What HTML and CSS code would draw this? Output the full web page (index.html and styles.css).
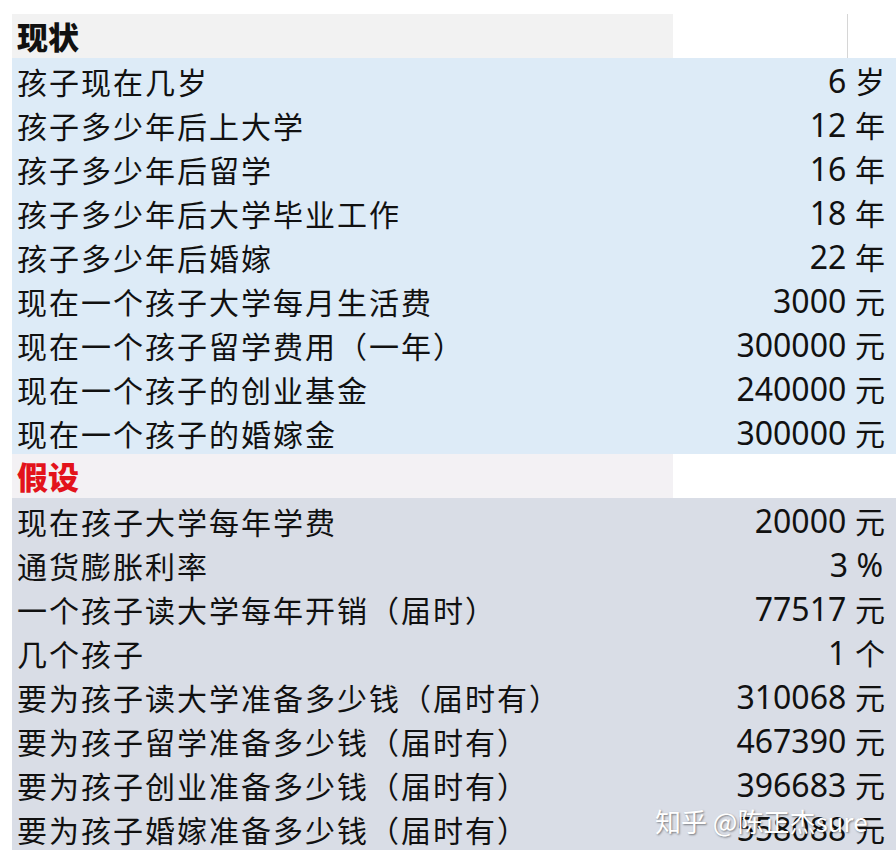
FILE: index.html
```html
<!DOCTYPE html>
<html lang="zh">
<head>
<meta charset="utf-8">
<link rel="stylesheet" href="styles.css">
</head>
<body>
<div class="sheet">
  <div class="row head head-now">
    <div class="label title">现状</div>
    <div class="blank divided"></div>
    <div class="blank"></div>
  </div>
  <div class="row blue"><div class="label">孩子现在几岁</div><div class="value"><span class="num">6</span> 岁</div></div>
  <div class="row blue"><div class="label">孩子多少年后上大学</div><div class="value"><span class="num">12</span> 年</div></div>
  <div class="row blue"><div class="label">孩子多少年后留学</div><div class="value"><span class="num">16</span> 年</div></div>
  <div class="row blue"><div class="label">孩子多少年后大学毕业工作</div><div class="value"><span class="num">18</span> 年</div></div>
  <div class="row blue"><div class="label">孩子多少年后婚嫁</div><div class="value"><span class="num">22</span> 年</div></div>
  <div class="row blue"><div class="label">现在一个孩子大学每月生活费</div><div class="value"><span class="num">3000</span> 元</div></div>
  <div class="row blue"><div class="label">现在一个孩子留学费用（一年）</div><div class="value"><span class="num">300000</span> 元</div></div>
  <div class="row blue"><div class="label">现在一个孩子的创业基金</div><div class="value"><span class="num">240000</span> 元</div></div>
  <div class="row blue"><div class="label">现在一个孩子的婚嫁金</div><div class="value"><span class="num">300000</span> 元</div></div>
  <div class="row head head-assume">
    <div class="label title red">假设</div>
    <div class="blank"></div>
    <div class="blank"></div>
  </div>
  <div class="row gray"><div class="label">现在孩子大学每年学费</div><div class="value"><span class="num">20000</span> 元</div></div>
  <div class="row gray"><div class="label">通货膨胀利率</div><div class="value"><span class="num">3 %</span></div></div>
  <div class="row gray"><div class="label">一个孩子读大学每年开销（届时）</div><div class="value"><span class="num">77517</span> 元</div></div>
  <div class="row gray"><div class="label">几个孩子</div><div class="value"><span class="num">1</span> 个</div></div>
  <div class="row gray"><div class="label">要为孩子读大学准备多少钱（届时有）</div><div class="value"><span class="num">310068</span> 元</div></div>
  <div class="row gray"><div class="label">要为孩子留学准备多少钱（届时有）</div><div class="value"><span class="num">467390</span> 元</div></div>
  <div class="row gray"><div class="label">要为孩子创业准备多少钱（届时有）</div><div class="value"><span class="num">396683</span> 元</div></div>
  <div class="row gray"><div class="label">要为孩子婚嫁准备多少钱（届时有）</div><div class="value"><span class="num">558088</span> 元</div></div>
  <div class="watermark">知乎 @陈正杰sure</div>
</div>
</body>
</html>
```

FILE: styles.css
```css
html, body {
  margin: 0;
  padding: 0;
  background: #ffffff;
}
body {
  width: 896px;
  height: 856px;
  overflow: hidden;
  font-family: "Noto Sans CJK SC", "Noto Sans", sans-serif;
  color: #111111;
}
.sheet {
  position: relative;
  margin: 14px 0 0 12px;
  width: 884px;
}
.row {
  display: grid;
  grid-template-columns: 661px 1fr;
  height: 44px;
  align-items: center;
}
.row.head {
  grid-template-columns: 661px 175px 1fr;
  align-items: stretch;
}
.head-now .label { background: #f2f2f2; }
.head-assume .label { background: #f3f1f4; }
.blank { background: #ffffff; }
.divided { border-right: 1px solid #d6d6d6; }
.blue { background: #ddebf7; }
.gray { background: #d9dde6; }
.label {
  padding-left: 5px;
  font-size: 30px;
  letter-spacing: 2px;
  line-height: 44px;
  white-space: nowrap;
}
.title {
  font-weight: 900;
  letter-spacing: 0;
  font-size: 31px;
}
.red { color: #e3131b; }
.value {
  text-align: right;
  padding-right: 11px;
  font-size: 30px;
  line-height: 44px;
  white-space: nowrap;
}
.num {
  font-family: "Noto Sans", "Open Sans", sans-serif;
  font-size: 32px;
  margin-right: 2px;
}
.watermark {
  position: absolute;
  left: 643px;
  top: 788px;
  font-size: 26px;
  color: #ffffff;
  text-shadow: 1px 1px 2px rgba(0,0,0,0.45);
  white-space: nowrap;
  font-family: "Noto Sans CJK SC", "Noto Sans", sans-serif;
}
```
